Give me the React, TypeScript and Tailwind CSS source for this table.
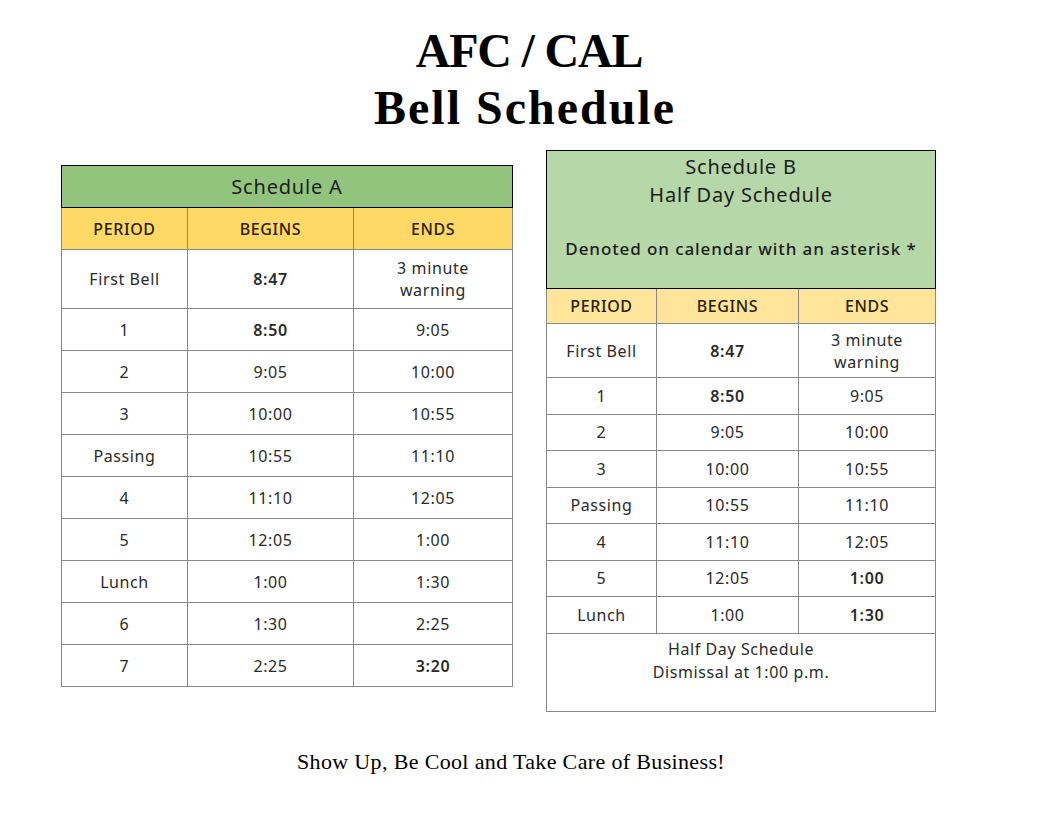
import React from "react";

type Row = { p: string; b: string; e: React.ReactNode; bb?: boolean; eb?: boolean };

const rowsA: Row[] = [
  { p: "1", b: "8:50", e: "9:05", bb: true },
  { p: "2", b: "9:05", e: "10:00" },
  { p: "3", b: "10:00", e: "10:55" },
  { p: "Passing", b: "10:55", e: "11:10" },
  { p: "4", b: "11:10", e: "12:05" },
  { p: "5", b: "12:05", e: "1:00" },
  { p: "Lunch", b: "1:00", e: "1:30" },
  { p: "6", b: "1:30", e: "2:25" },
  { p: "7", b: "2:25", e: "3:20", eb: true },
];

const rowsB: Row[] = [
  { p: "1", b: "8:50", e: "9:05", bb: true },
  { p: "2", b: "9:05", e: "10:00" },
  { p: "3", b: "10:00", e: "10:55" },
  { p: "Passing", b: "10:55", e: "11:10" },
  { p: "4", b: "11:10", e: "12:05" },
  { p: "5", b: "12:05", e: "1:00", eb: true },
  { p: "Lunch", b: "1:00", e: "1:30", eb: true },
];

const font = { fontFamily: "'Noto Sans', Lato, sans-serif" };
const serif = { fontFamily: "'Liberation Serif', 'DejaVu Serif', serif" };

export default function App() {
  return (
    <div className="w-[1056px] h-[816px] bg-white relative text-[#2a2a2a]">
      <div className="pt-[22px] text-center font-bold text-[48px] leading-[57px] text-black" style={serif}>
        <div className="pl-[2px] tracking-[-1.2px]">AFC / CAL</div>
        <div className="tracking-[2px] pr-[6px]">Bell Schedule</div>
      </div>

      <div className="flex items-start mt-[14px] tracking-[0.6px]" style={font}>
        {/* Schedule A */}
        <table className="ml-[61px] mt-[15px] w-[451px] border-collapse text-[16px] text-center table-fixed">
          <colgroup>
            <col className="w-[126px]" />
            <col className="w-[166px]" />
            <col className="w-[159px]" />
          </colgroup>
          <tbody>
            <tr className="h-[42px] bg-[#93c47d]">
              <td colSpan={3} className="border border-black text-[20px] tracking-[0.8px] text-[#1c1c1c]">Schedule A</td>
            </tr>
            <tr className="h-[42px] bg-[#ffd966] text-[#2a2000] font-medium">
              <td className="border border-[#888] border-t-black">PERIOD</td>
              <td className="border border-[#888] border-t-black">BEGINS</td>
              <td className="border border-[#888] border-t-black">ENDS</td>
            </tr>
            <tr className="h-[59px]">
              <td className="border border-[#888]">First Bell</td>
              <td className="border border-[#888] font-semibold">8:47</td>
              <td className="border border-[#888] leading-[22px]">3 minute<br />warning</td>
            </tr>
            {rowsA.map((r, i) => (
              <tr key={i} className="h-[42px]">
                <td className="border border-[#888]">{r.p}</td>
                <td className={"border border-[#888] " + (r.bb ? "font-semibold" : "")}>{r.b}</td>
                <td className={"border border-[#888] " + (r.eb ? "font-semibold" : "")}>{r.e}</td>
              </tr>
            ))}
          </tbody>
        </table>

        {/* Schedule B */}
        <table className="ml-[33px] w-[389px] border-collapse text-[16px] text-center table-fixed">
          <colgroup>
            <col className="w-[110px]" />
            <col className="w-[142px]" />
            <col className="w-[137px]" />
          </colgroup>
          <tbody>
            <tr className="h-[138px] bg-[#b6d7a8]">
              <td colSpan={3} className="border border-black text-[#1c1c1c] align-top pt-[2px]">
                <div className="text-[20px] leading-[28px] tracking-[0.8px]">Schedule B</div>
                <div className="text-[20px] leading-[28px] tracking-[0.8px]">Half Day Schedule</div>
                <div className="text-[17px] leading-[28px] mt-[26px] font-medium tracking-[0.9px]">Denoted on calendar with an asterisk *</div>
              </td>
            </tr>
            <tr className="h-[35px] bg-[#ffe599] text-[#2a2000] font-medium">
              <td className="border border-[#888] border-t-black">PERIOD</td>
              <td className="border border-[#888] border-t-black">BEGINS</td>
              <td className="border border-[#888] border-t-black">ENDS</td>
            </tr>
            <tr className="h-[54px]">
              <td className="border border-[#888]">First Bell</td>
              <td className="border border-[#888] font-semibold">8:47</td>
              <td className="border border-[#888] leading-[22px]">3 minute<br />warning</td>
            </tr>
            {rowsB.map((r, i) => (
              <tr key={i} className="h-[36.5px]">
                <td className="border border-[#888]">{r.p}</td>
                <td className={"border border-[#888] " + (r.bb ? "font-semibold" : "")}>{r.b}</td>
                <td className={"border border-[#888] " + (r.eb ? "font-semibold" : "")}>{r.e}</td>
              </tr>
            ))}
            <tr className="h-[78px]">
              <td colSpan={3} className="border border-[#888] align-top pt-[4px] leading-[23px]">
                Half Day Schedule<br />Dismissal at 1:00 p.m.
              </td>
            </tr>
          </tbody>
        </table>
      </div>

      <div className="absolute left-0 right-0 top-[745px] text-center text-[22px] tracking-[0.35px] text-black" style={serif}>
        <span className="relative left-[-17px]">Show Up, Be Cool and Take Care of Business!</span>
      </div>
    </div>
  );
}
